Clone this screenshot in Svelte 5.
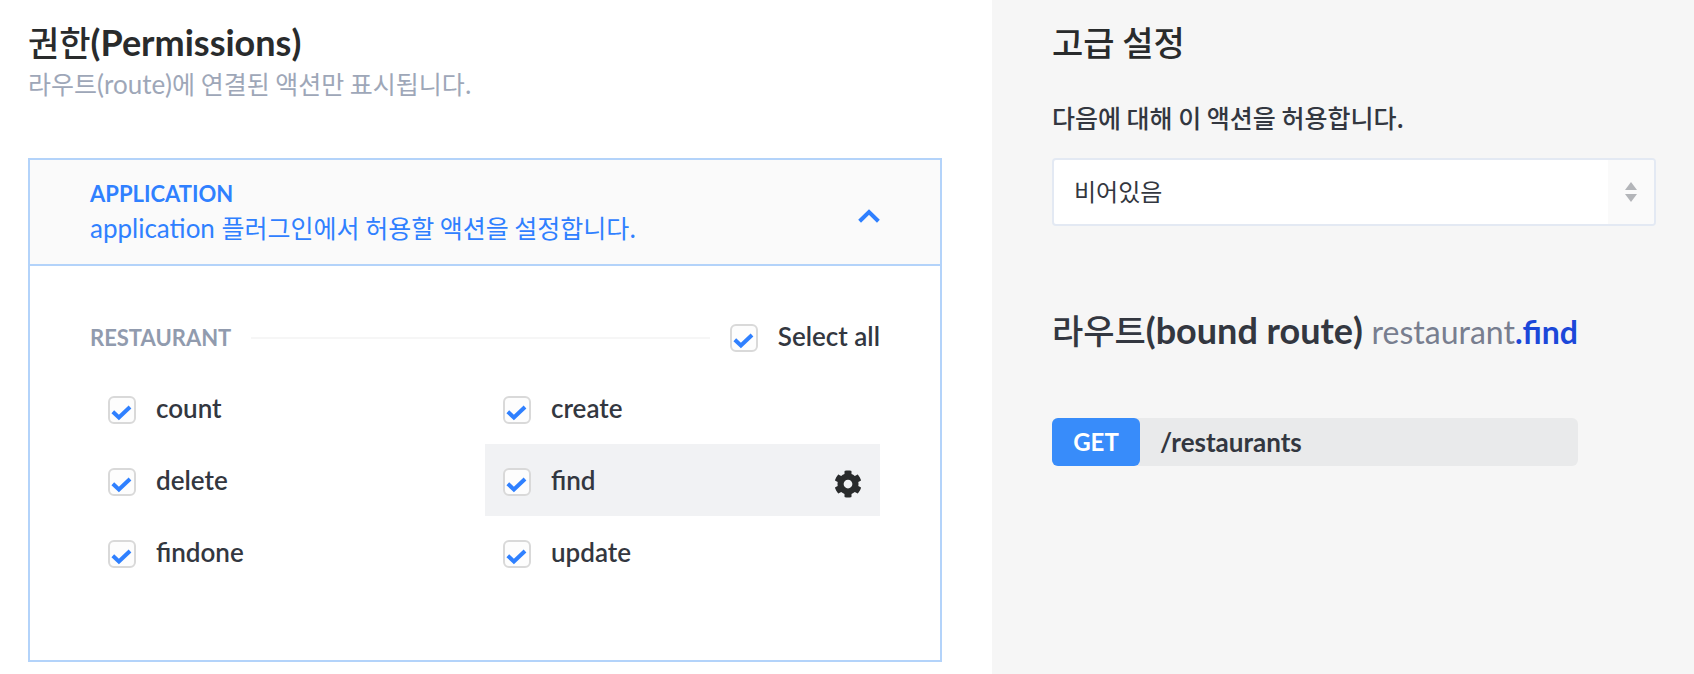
<script lang="ts">
  type Action = { name: string; enabled: boolean };

  let open = $state(true);
  let selected = $state('find');
  let policy = $state('');

  let actions = $state<Action[]>([
    { name: 'count', enabled: true },
    { name: 'create', enabled: true },
    { name: 'delete', enabled: true },
    { name: 'find', enabled: true },
    { name: 'findone', enabled: true },
    { name: 'update', enabled: true },
  ]);

  let allEnabled = $derived(actions.every((a) => a.enabled));

  function toggleAll() {
    const next = !allEnabled;
    for (const a of actions) a.enabled = next;
  }
</script>

{#snippet tick()}
  <svg class="tick" viewBox="0 0 28 28" aria-hidden="true">
    <path d="M4.8 15.8l6.1 5.6L22 11" fill="none" stroke="#2f80ff" stroke-width="4" />
  </svg>
{/snippet}

<div class="page">
  <main class="permissions">
    <h2><span class="ko">권한</span>(Permissions)</h2>
    <p class="subtitle">
      <span class="ko">라우트</span>(route)<span class="ko">에 연결된 액션만 표시됩니다.</span>
    </p>

    <section class="card">
      <button class="card-head" type="button" aria-expanded={open} onclick={() => (open = !open)}>
        <span class="card-text">
          <span class="plugin">APPLICATION</span>
          <span class="desc">application <span class="ko">플러그인에서 허용할 액션을 설정합니다.</span></span>
        </span>
        <svg class="chevron" class:closed={!open} viewBox="0 0 22 14" aria-hidden="true">
          <path d="M1.6 12.2L11 3l9.4 9.2" fill="none" stroke="#2f80ff" stroke-width="4" />
        </svg>
      </button>

      {#if open}
        <div class="card-body">
          <div class="group-head">
            <h3>RESTAURANT</h3>
            <span class="line"></span>
            <label class="check">
              <span class="box">
                <input type="checkbox" checked={allEnabled} onchange={toggleAll} />
                {@render tick()}
              </span>
              <span class="name">Select all</span>
            </label>
          </div>

          <div class="actions">
            {#each actions as action (action.name)}
              <div class="action" class:active={selected === action.name}>
                <label class="check">
                  <span class="box">
                    <input type="checkbox" bind:checked={action.enabled} onchange={() => (selected = action.name)} />
                    {@render tick()}
                  </span>
                  <span class="name">{action.name}</span>
                </label>
                {#if selected === action.name}
                  <button class="cog" type="button" aria-label="{action.name} settings">
                    <svg viewBox="0 0 512 512" aria-hidden="true">
                      <path
                        fill="currentColor"
                        d="M487.4 315.7l-42.6-24.6c4.3-23.2 4.3-47 0-70.2l42.6-24.6c4.9-2.8 7.1-8.6 5.5-14-11.1-35.6-30-67.8-54.7-94.6-3.8-4.1-10-5.1-14.8-2.3L380.8 110c-17.9-15.4-38.5-27.3-60.8-35.1V25.8c0-5.6-3.9-10.5-9.4-11.7-36.7-8.2-74.3-7.8-109.2 0-5.5 1.2-9.4 6.1-9.4 11.7V75c-22.2 7.9-42.8 19.8-60.8 35.1L88.7 85.5c-4.9-2.8-11-1.9-14.8 2.3-24.7 26.7-43.6 58.9-54.7 94.6-1.7 5.4.6 11.2 5.5 14L67.3 221c-4.3 23.2-4.3 47 0 70.2l-42.6 24.6c-4.9 2.8-7.1 8.6-5.5 14 11.1 35.6 30 67.8 54.7 94.6 3.8 4.1 10 5.1 14.8 2.3l42.6-24.6c17.9 15.4 38.5 27.3 60.8 35.1v49.2c0 5.6 3.9 10.5 9.4 11.7 36.7 8.2 74.3 7.8 109.2 0 5.5-1.2 9.4-6.1 9.4-11.7v-49.2c22.2-7.9 42.8-19.8 60.8-35.1l42.6 24.6c4.9 2.8 11 1.9 14.8-2.3 24.7-26.7 43.6-58.9 54.7-94.6 1.5-5.5-.7-11.3-5.6-14.1zM256 336c-44.1 0-80-35.9-80-80s35.9-80 80-80 80 35.9 80 80-35.9 80-80 80z"
                      />
                    </svg>
                  </button>
                {/if}
              </div>
            {/each}
          </div>
        </div>
      {/if}
    </section>
  </main>

  <aside class="advanced">
    <h2><span class="ko">고급 설정</span></h2>

    <label class="policy-label" for="policy"><span class="ko">다음에 대해 이 액션을 허용합니다.</span></label>
    <div class="select">
      <select id="policy" bind:value={policy}>
        <option value="">비어있음</option>
      </select>
      <span class="arrows" aria-hidden="true">
        <svg viewBox="0 0 12 20">
          <path d="M6 0l6 8H0zM6 20l6-8H0z" fill="#b3b5b9" />
        </svg>
      </span>
    </div>

    <div class="route">
      <h2 class="route-title">
        <span class="ko">라우트</span>(bound route)
        <span class="path">restaurant<b>.{selected}</b></span>
      </h2>
      <div class="endpoint">
        <span class="verb">GET</span>
        <span class="url">/restaurants</span>
      </div>
    </div>
  </aside>
</div>

<style>
  :global(body) {
    background: #fff;
  }
  .page {
    display: grid;
    grid-template-columns: 992fr 702fr;
    min-height: 100vh;
    font-family: Lato, 'Noto Sans CJK KR', sans-serif;
    font-size: 26px;
    line-height: 36px;
    color: #333740;
  }
  h2,
  h3,
  p {
    margin: 0;
  }
  button,
  select {
    font: inherit;
    color: inherit;
  }
  h2 {
    font-size: 36px;
    line-height: 44px;
    font-weight: 700;
    color: #292b2c;
  }
  /* hangul runs larger than Lato at the same size */
  .ko {
    font-family: 'Noto Sans CJK KR', sans-serif;
    font-size: 25px;
    line-height: 1;
  }
  h2 .ko {
    font-size: 34px;
    font-weight: 500;
  }

  .permissions {
    padding: 20px 50px 12px 28px;
  }
  .subtitle {
    margin-top: 2px;
    color: #9ea7b8;
  }
  .card {
    margin-top: 56px;
    border: 2px solid #b3d3fa;
  }
  .card-head {
    display: flex;
    align-items: center;
    justify-content: space-between;
    width: 100%;
    padding: 18px 60px;
    border: 0;
    background: #fafafa;
    color: #2f80ff;
    text-align: left;
    cursor: pointer;
  }
  .card-text {
    display: flex;
    flex-direction: column;
  }
  .plugin {
    font-size: 22px;
    line-height: 32px;
    font-weight: 700;
  }
  .chevron {
    width: 22px;
    height: 14px;
    margin-top: 8px;
  }
  .chevron.closed {
    transform: rotate(180deg);
  }
  .card-body {
    padding: 54px 60px 72px;
    border-top: 2px solid #b3d3fa;
  }
  .group-head {
    display: flex;
    align-items: center;
    gap: 20px;
    height: 36px;
  }
  h3 {
    font-size: 22px;
    font-weight: 700;
    color: #919bae;
  }
  .line {
    flex: 1;
    height: 2px;
    background: #f6f6f6;
  }
  .check {
    display: flex;
    align-items: center;
    gap: 20px;
    font-weight: 600;
    cursor: pointer;
  }
  .name {
    padding-bottom: 4px;
    line-height: 32px;
  }
  .box {
    display: grid;
    width: 28px;
    height: 28px;
  }
  .box input {
    grid-area: 1 / 1;
    appearance: none;
    width: 28px;
    height: 28px;
    margin: 0;
    border: 2px solid #d9d9d9;
    border-radius: 6px;
    background: #fdfdfd;
  }
  .tick {
    grid-area: 1 / 1;
    width: 28px;
    height: 28px;
    pointer-events: none;
    visibility: hidden;
  }
  .box input:checked + .tick {
    visibility: visible;
  }
  .actions {
    display: grid;
    grid-template-columns: 1fr 1fr;
    margin-top: 16px;
  }
  .action {
    display: flex;
    align-items: center;
    justify-content: space-between;
    box-sizing: border-box;
    height: 72px;
    padding: 4px 18px 0;
  }
  .action.active {
    background: #f1f2f4;
  }
  .cog {
    display: flex;
    padding: 4px 0 0;
    border: 0;
    background: none;
    color: #292b2c;
    cursor: pointer;
  }
  .cog svg {
    width: 28px;
    height: 28px;
  }

  .advanced {
    padding: 20px 38px 20px 60px;
    background: #f6f6f6;
  }
  .policy-label {
    display: block;
    margin: 36px 0 22px;
    font-weight: 500;
  }
  .select {
    display: grid;
    height: 68px;
    box-sizing: border-box;
    border: 2px solid #e3e9f3;
    border-radius: 4px;
    background: #fff;
    overflow: hidden;
  }
  .select select {
    grid-area: 1 / 1;
    appearance: none;
    width: 100%;
    padding: 0 64px 0 20px;
    border: 0;
    background: none;
    font-size: 24px;
  }
  .arrows {
    grid-area: 1 / 1;
    justify-self: end;
    display: flex;
    align-items: center;
    justify-content: center;
    width: 46px;
    background: #fafafa;
    pointer-events: none;
  }
  .arrows svg {
    width: 12px;
    height: 20px;
  }
  .route {
    margin: 82px 78px 0 0;
  }
  .route-title {
    color: #333740;
    white-space: nowrap;
  }
  .path {
    font-size: 32px;
    font-weight: 400;
    color: #787e8f;
  }
  .path b {
    font-weight: 700;
    color: #1b48d9;
  }
  .endpoint {
    display: flex;
    align-items: center;
    margin-top: 64px;
    border-radius: 6px;
    background: #e9eaeb;
    line-height: 48px;
  }
  .verb {
    min-width: 88px;
    border-radius: 6px;
    background: #388cfa;
    color: #fff;
    font-size: 24px;
    font-weight: 700;
    text-align: center;
  }
  .url {
    padding: 0 20px;
    font-weight: 700;
  }
</style>
